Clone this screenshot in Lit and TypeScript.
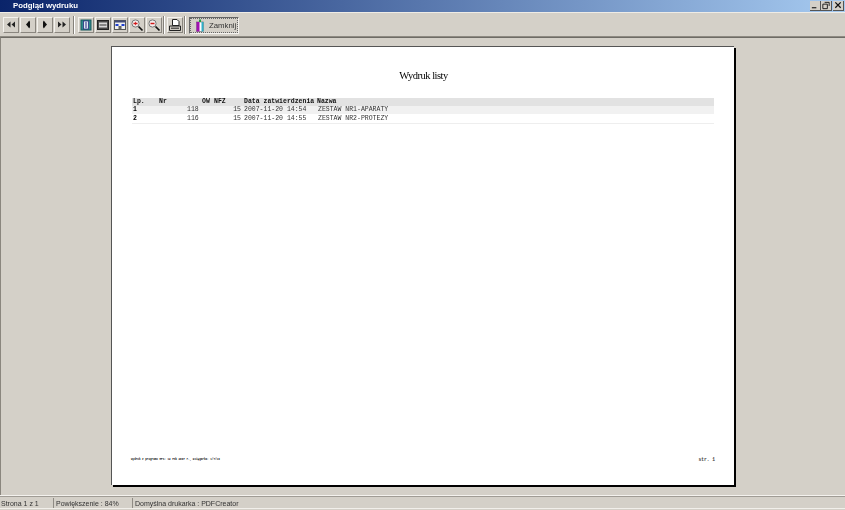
import { LitElement, html, css, svg } from "lit";
import { customElement } from "lit/decorators.js";

const icons: Record<string, any> = {
  first: svg`<path d="M7 3.5v6L3.5 6.5zM11.5 3.5v6L8 6.5z" fill="#222"/>`,
  prev: svg`<path d="M9 2.5v8L5.5 6.5z" fill="#111"/><rect x="8" y="3.5" width="1.5" height="6" fill="#111"/>`,
  next: svg`<path d="M6 2.5v8l3.5-4z" fill="#111"/><rect x="5.5" y="3.5" width="1.5" height="6" fill="#111"/>`,
  last: svg`<path d="M3.5 3.5v6L7 6.5zM8 3.5v6l3.5-3z" fill="#222"/>`,
  pageW: svg`<rect x="2.5" y="2" width="10" height="10" fill="#2f8a8c" stroke="#185a5c"/><rect x="5" y="3" width="5" height="8" fill="#dfe8f4" stroke="#2b2f80" stroke-width=".8"/><path d="M7.5 4v6" stroke="#2b2f80"/>`,
  pageH: svg`<rect x="2" y="2.5" width="11" height="9" fill="#4a4a4a" stroke="#222"/><rect x="3.5" y="4.5" width="8" height="5" fill="#d8d8d8"/><path d="M4 7h7" stroke="#333"/>`,
  pageF: svg`<rect x="2" y="2.5" width="11" height="9" fill="#efefef" stroke="#555"/><rect x="2" y="2.5" width="11" height="2" fill="#444c78"/><path d="M3 7h3M12 7H9" stroke="#1f3fd0" stroke-width="2"/><rect x="6" y="8" width="3" height="3" fill="#666"/>`,
  zoomIn: svg`<circle cx="6" cy="5.5" r="3.6" fill="#f3eeee" stroke="#777"/><path d="M4 5.5h4" stroke="#d01818" stroke-width="1.5"/><path d="M6 3.8v3.4" stroke="#d01818" stroke-width=".8"/><path d="M9 8.5l4 4" stroke="#111" stroke-width="1.7"/>`,
  zoomOut: svg`<circle cx="6" cy="5.5" r="3.6" fill="#f3eeee" stroke="#777"/><path d="M4 5.5h4" stroke="#d01818" stroke-width="1.5"/><path d="M9 8.5l4 4" stroke="#111" stroke-width="1.7"/>`,
  print: svg`<path d="M5 1.5h4.5l2 2v4H5z" fill="#fff" stroke="#222"/><path d="M2 8h11v4.5H2z" fill="#cfcac2" stroke="#222"/><path d="M3.5 10.2h8" stroke="#222"/>`,
};

@customElement("app-root")
export class AppRoot extends LitElement {
  static styles = css`
    :host { display: block; width: 845px; height: 510px; overflow: hidden; background: #d4d0c8; font-family: "Liberation Sans", sans-serif; }
    .win { display: flex; flex-direction: column; height: 510px; }
    .title { height: 12px; flex: none; display: flex; align-items: center; justify-content: space-between; background: linear-gradient(90deg, #0a246a, #a6caf0); padding: 0 1px 0 13px; }
    .title span { color: #fff; font: bold 7.8px/12px "Liberation Sans", sans-serif; filter: blur(0.2px); }
    .wbtns { display: flex; }
    .wb { width: 11px; height: 10px; background: #d4d0c8; border-right: 1px solid #555; border-bottom: 1px solid #555; box-sizing: border-box; display: block; }
    .wbtns svg:last-child { margin-left: 1px; }
    .toolbar { height: 25px; flex: none; box-sizing: border-box; display: flex; align-items: center; padding: 1px 0 0 3px; border-top: 1px solid #efece6; border-bottom: 1px solid #8e8a82; }
    .btn { width: 16px; height: 16px; box-sizing: border-box; display: flex; align-items: center; justify-content: center; border: 1px solid; border-color: #f4f2ee #8a867f #8a867f #f4f2ee; }
    .btn + .btn { margin-left: 1px; }
    .sep { width: 1px; height: 18px; background: #85817a; border-right: 1px solid #fff; margin: 0 3px; }
    .sep.s2 { margin: 0 2px 0 1px; }
    .sep.s3 { margin: 0 3px 0 1px; }
    .close { width: 50px; height: 17px; box-sizing: border-box; display: flex; align-items: center; gap: 5px; padding-left: 6px; border: 1px solid; border-color: #666 #f4f2ee #f4f2ee #666; outline: 1px dotted #666; outline-offset: -2px; font: 7.8px "Liberation Sans", sans-serif; color: #333; }
    .close span { filter: blur(0.2px); }
    .stage { flex: 1; min-height: 0; padding: 8px 0 0 110px; border-left: 1px solid #8a867e; border-top: 1px solid #6e6b65; box-sizing: border-box; }
    .page { width: 623px; height: 439px; box-sizing: border-box; background: #fff; border-left: 1px solid #555; border-top: 1px solid #555; box-shadow: 2px 2px 0 #000; padding: 21px 20px 0 20px; display: flex; flex-direction: column; }
    .heading { font: 10.5px/15px "Liberation Serif", serif; letter-spacing: -0.5px; text-align: center; color: #000; height: 15px; padding-left: 1px; filter: blur(0.25px); }
    .table { margin-top: 15px; font: 6.5px/8px "Liberation Mono", monospace; color: #333; filter: blur(0.25px); }
    .row { display: grid; grid-template-columns: 26px 28px 15px 11px 31px 73px 1fr; height: 8px; padding-left: 1px; white-space: nowrap; }
    .row.head { background: #e2e2e2; font-weight: bold; color: #111; }
    .row.odd { background: #f1f1f1; }
    .row.even { margin-top: 1px; border-bottom: 1px solid #eee; }
    .num { font-weight: bold; color: #000; }
    .r { text-align: right; padding-right: 3px; }
    .name { padding-left: 1px; }
    .nfz { padding-left: 1px; }
    .foot { margin: auto -1px 22px -1px; display: flex; justify-content: space-between; align-items: center; font: bold 2.65px/6px "Liberation Mono", monospace; color: #111; }
    .foot .pg { font-size: 4.6px; color: #444; }
    .status { height: 15px; flex: none; box-sizing: border-box; display: flex; border-top: 1px solid #f4f2ee; position: relative; padding-top: 1px; }
    .status::before { content: ""; position: absolute; left: 0; right: 0; top: 0; height: 1px; background: #a09c95; }
    .panel { box-sizing: border-box; height: 11px; font: 7px/11px "Liberation Sans", sans-serif; color: #333; white-space: nowrap; padding-left: 2px; border-left: 1px solid #8f8b84; margin-top: 1px; }
    .panel span { filter: blur(0.2px); display: inline-block; }
    .panel:first-child { border-left: 0; padding-left: 1px; width: 53px; }
    .p2 { width: 79px; }
    .p3 { flex: 1; }
    .status::after { content: ""; position: absolute; left: 0; right: 0; bottom: 1px; height: 1px; background: #f1efea; }
  `;

  private btn(k: string) {
    return html`<div class="btn"><svg width="14" height="14" viewBox="0.5 0 14 14">${icons[k]}</svg></div>`;
  }

  render() {
    return html`<div class="win">
      <div class="title"><span>Podgląd wydruku</span>
        <div class="wbtns">
          <svg class="wb" viewBox="0 0 11 10"><path d="M2 7.5h5" stroke="#111" stroke-width="1.2"/></svg>
          <svg class="wb" viewBox="0 0 11 10"><path d="M4 1.5h5v4M2 3.5h5v5H2z" fill="none" stroke="#111"/></svg>
          <svg class="wb" viewBox="0 0 11 10"><path d="M2.5 1.5l6 6M8.5 1.5l-6 6" stroke="#111" stroke-width="1.4"/></svg>
        </div>
      </div>
      <div class="toolbar">
        ${["first","prev","next","last"].map(k => this.btn(k))}
        <div class="sep"></div>
        ${["pageW","pageH","pageF","zoomIn","zoomOut"].map(k => this.btn(k))}
        <div class="sep s2"></div>
        ${this.btn("print")}
        <div class="sep s3"></div>
        <div class="close">
          <svg width="8" height="13" viewBox="0 0 8 13"><rect x=".5" y="3" width="7" height="9.5" fill="#fff" stroke="#444" stroke-width=".5"/><rect x=".5" y="3" width="3" height="9.5" fill="#a010b0"/><rect x="5.5" y="3" width="2" height="9.5" fill="#30b0c8"/><path d="M4 .5V3" stroke="#20a040" stroke-width="2"/></svg>
          <span>Zamknij</span>
        </div>
      </div>
      <div class="stage">
        <div class="page">
          <div class="heading">Wydruk listy</div>
          <div class="table">
            <div class="row head"><span>Lp.</span><span>Nr</span><span></span><span>OW</span><span class="nfz">NFZ</span><span>Data zatwierdzenia</span><span>Nazwa</span></div>
            <div class="row odd"><span class="num">1</span><span></span><span>118</span><span></span><span class="r">15</span><span>2007-11-20 14:54</span><span class="name">ZESTAW NR1-APARATY</span></div>
            <div class="row even"><span class="num">2</span><span></span><span>116</span><span></span><span class="r">15</span><span>2007-11-20 14:55</span><span class="name">ZESTAW NR2-PROTEZY</span></div>
          </div>
          <div class="foot"><span>Wydruk z programu MPS: 12 Feb 2007 r., Księgarka: 1/7/10</span><span class="pg">str. 1</span></div>
        </div>
      </div>
      <div class="status">
        <div class="panel"><span>Strona 1 z 1</span></div>
        <div class="panel p2"><span>Powiększenie : 84%</span></div>
        <div class="panel p3"><span>Domyślna drukarka : PDFCreator</span></div>
      </div>
    </div>`;
  }
}
